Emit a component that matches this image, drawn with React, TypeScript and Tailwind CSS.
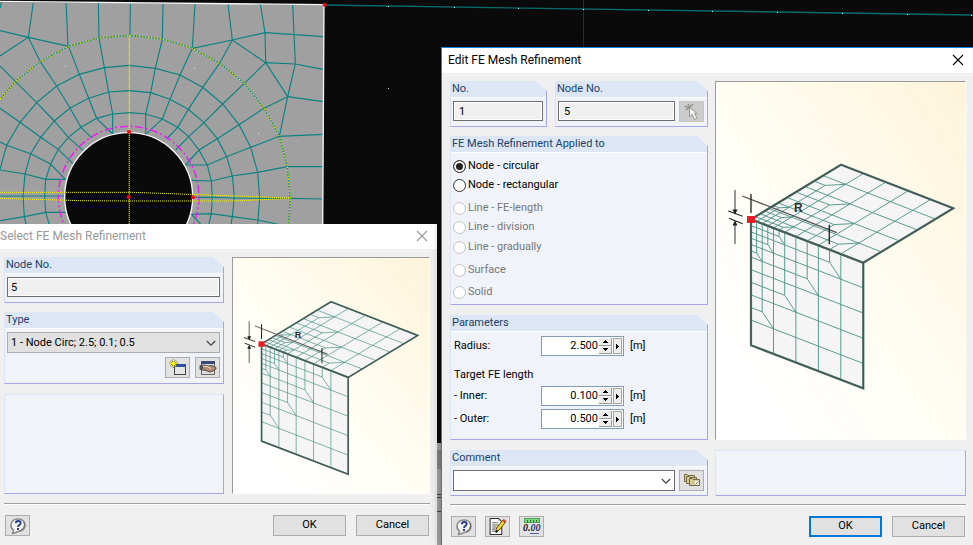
import type { ReactNode } from "react";

type Point = [number, number];

/* ---------- Model view behind the dialogs ---------- */

const spokes: string[] = [
  "338,402 338,342 326,276 313,203 297,114",
  "338,402 290,355 266,295 238,223 206,139",
  "275,413 243,382 210,324 170,258 121,185",
  "250,452 205,412 163,363 110,308 46,244 0,198",
  "220,492 175,448 122,412 60,367 0,325",
  "196,538 152,492 92,461 20,436 0,426",
  "196,538 137,538 75,522 0,510",
  "193,588 134,588 69,588 0,588",
  "198,637 137,637 73,650 0,662",
  "437,403 437,342 452,278 466,205 487,117",
  "437,403 487,357 510,298 540,225 577,145",
  "500,417 533,382 565,328 608,262 659,190",
  "527,450 566,410 612,368 668,312 733,250",
  "556,495 597,450 652,416 717,374 792,325",
  "556,495 622,495 680,470 752,442 838,409",
  "574,541 634,543 697,528 773,517 862,500",
  "579,592 637,592 703,594 779,595 871,595",
  "574,643 634,641 697,650 773,660 866,680",
  "574,643 602,672",
];

const rings: string[] = [
  "150,680 137,637 134,588 137,538 152,492 175,448 205,412 243,382 290,355 338,342 388,338 437,342 487,357 533,382 566,410 597,450 622,495 634,543 637,592 634,641 625,680",
  "80,680 73,650 69,588 75,522 92,461 122,412 163,363 210,324 266,295 326,276 388,272 452,278 510,298 565,328 612,368 652,416 680,470 697,528 703,590 697,650 692,680",
  "0,508 20,436 60,367 110,308 170,258 238,223 313,203 388,196 466,205 540,225 608,262 668,312 717,374 752,442 773,517 779,592 773,672",
  "0,297 46,244 121,185 206,139 297,114 390,106 487,117 577,145 659,190 733,250 792,325 838,409 862,500 871,595 865,680",
];

const outerEdges: string[] = [
  "5,5 0,25",
  "100,8 85,112",
  "198,5 204,139",
  "295,8 297,114",
  "391,10 390,106",
  "489,12 487,117",
  "585,12 577,145",
  "684,12 697,120",
  "781,12 795,98",
  "878,12 886,192 863,290",
  "0,92 85,112 206,139",
  "0,168 85,112 121,185",
  "577,145 697,120 795,98 970,110",
  "659,190 697,120 797,188 795,98",
  "733,250 797,188 886,192 970,208",
  "797,188 863,290 970,305",
  "792,325 863,290 838,409 970,403",
  "862,500 970,500",
  "871,595 970,597",
];

const gridDots = [388, 454, 518, 583, 648, 712, 777, 842, 907, 971];

function ModelView() {
  return (
    <svg className="absolute left-0 top-0 h-[545px] w-[973px]" viewBox="0 0 973 545" aria-hidden="true">
      <rect width="973" height="545" fill="#0a0a0a" />
      <path d="M583.5 0V60" stroke="#2c2c2c" />
      <path d="M325 5L973 15" stroke="#056c6c" strokeWidth="1.3" />
      {gridDots.map((x) => (
        <rect key={x} x={x} y={5 + Math.round((x - 325) / 65)} width="1" height="1" fill="#e8ffff" />
      ))}
      <rect x="388" y="88" width="1" height="1" fill="#ddd" />
      <g transform="scale(0.33333)" fill="none">
        <path d="M0 6L972 14L968 690H0Z" fill="#a0a0a0" />
        <g stroke="#0b8282" strokeWidth="3.4">
          {[...spokes, ...rings, ...outerEdges].map((points, i) => (
            <polyline key={i} points={points} />
          ))}
        </g>
        <path d="M0 4L972 14L968 690" stroke="#f4f4f4" strokeWidth="4" />
        <polyline points={rings[3]} stroke="#f0f000" strokeWidth="3.5" strokeDasharray="4 5" />
        <circle cx="386" cy="590" r="211" stroke="#f312f3" strokeWidth="4" strokeDasharray="24 8 6 8" />
        <circle cx="386" cy="590" r="192" fill="#0a0a0a" stroke="#f4f4f4" strokeWidth="4" />
        <g stroke="#f4f410" strokeWidth="3" strokeDasharray="3 3">
          <path d="M388 106V680" strokeWidth="4" />
          <path d="M0 577H400L871 594" />
          <path d="M0 595L240 602L400 603H700L871 595" />
        </g>
        <g fill="#fb0505">
          <circle cx="387" cy="396" r="6" />
          <circle cx="386" cy="591" r="6" />
          <circle cx="579" cy="592" r="6" />
          <circle cx="974" cy="14" r="6" />
        </g>
        <g fill="#e4e4e4">
          <rect x="195" y="198" width="3" height="3" />
          <rect x="582" y="204" width="3" height="3" />
          <rect x="774" y="399" width="3" height="3" />
        </g>
      </g>
      <g>
        <rect x="437" y="443" width="5" height="102" fill="#a4a7ab" />
        <rect x="437" y="450" width="5" height="19" fill="#83878d" />
        <path d="M437 494.500H442M437 497.500H442M437 511.500H442" stroke="#444" />
      </g>
    </svg>
  );
}

/* ---------- Graded corner mesh drawing ---------- */

const corner: Point = [35, 137.300];
const along: Point = [112.300, 43.400];
const down: Point = [0, 126];
const back: Point = [90, -54.600];

const meshSegments: number[][] = [
  ...[0.200, 0.400, 0.600, 0.800].flatMap((k) => [
    [k, 0, k, 1],
    [0, k, 1, k],
  ]),
  ...[
    [0.1, 0.7],
    [0.3, 0.5],
    [0.5, 0.3],
    [0.7, 0.1],
  ].flatMap(([u, v]) => [
    [u, 0, u, v],
    [0, v, u, v],
    [u, v, u + 0.1, v + 0.1],
  ]),
  ...[
    [0.05, 0.25],
    [0.15, 0.15],
    [0.25, 0.05],
  ].flatMap(([u, v]) => [
    [u, 0, u, v],
    [0, v, u, v],
    [u, v, u + 0.05, v + 0.05],
  ]),
];

function facePath(side: Point) {
  const at = (u: number, v: number) =>
    `${(corner[0] + u * along[0] + v * side[0]).toFixed(1)} ${(corner[1] + u * along[1] + v * side[1]).toFixed(1)}`;
  return meshSegments.map(([a, b, c, d]) => `M${at(a, b)}L${at(c, d)}`).join("");
}

function MeshSketch({ viewBox }: { viewBox: string }) {
  return (
    <div className="min-h-0 flex-1 border border-[#fffefa] border-l-[#9a9a9a] border-t-[#9a9a9a] bg-linear-to-tr from-white from-15% via-[#fffdf3] via-50% to-[#fdf4d9]">
      <svg className="h-full w-full" viewBox={viewBox} preserveAspectRatio="xMinYMin meet" role="img" aria-label="Circular mesh refinement around a node with radius R">
        <g fill="#f5f5f6" stroke="#4d8075" strokeWidth="2.200">
          <path d="M35 137.300L147.300 180.700V306.300L35 263.300Z" />
          <path d="M35 137.300L125 82.700L237.300 126.300L147.300 180.700Z" />
        </g>
        <path d={facePath(down)} fill="none" stroke="#4b9282" strokeWidth="0.900" />
        <path d={facePath(back)} fill="none" stroke="#4b9282" strokeWidth="0.900" />
        <path d="M35 137.300L125 82.700L237.300 126.300L147.300 180.700ZM147.300 180.700V306.300L35 263.300V137" fill="none" stroke="#4a5452" strokeWidth="1.400" />
        <path d="M26.300 114L120.700 150.700" stroke="#565252" strokeWidth="1.300" />
        <path d="M35 112V131M113.300 142.700V162.300" stroke="#1f1f1f" strokeWidth="1.300" />
        <path d="M19 108V130M19 141V162" stroke="#777" strokeWidth="1.500" />
        <path d="M12.300 129L26.700 134.300M13 136.300L26.700 141.700" stroke="#222" strokeWidth="1.200" />
        <path d="M16.500 127.500H21.500L19 132.500ZM16.500 143.500H21.500L19 138.500Z" fill="#1b1b1b" />
        <rect x="31" y="134" width="8" height="7" fill="#ec1c24" />
        <text x="78" y="130" fontSize="12" fontWeight="700" fill="#2e2e2e" fontFamily="Liberation Sans, Arial, sans-serif">
          R
        </text>
      </svg>
    </div>
  );
}

/* ---------- Controls ---------- */

function Group({ title, className = "", children }: { title: string; className?: string; children: ReactNode }) {
  return (
    <section
      className={`flex flex-col border-b border-l border-r border-b-[#a6a6ea] border-l-[#d9e5f7] border-r-[#a6a6ea] bg-[#f0f4fa] [clip-path:polygon(0_0,calc(100%-11px)_0,100%_10px,100%_100%,0_100%)] ${className}`}
    >
      <h2 className="h-[17px] border-b border-white bg-[#dce6f5] pl-px text-[11px] leading-[16px] text-[#1c4268]">
        {title}
      </h2>
      {children}
    </section>
  );
}

function EmptyPanel({ className }: { className: string }) {
  return <div className={`border border-b-[#a6a6ea] border-l-[#d9e5f7] border-r-[#a6a6ea] border-t-[#d9e5f7] bg-[#f0f4fa] ${className}`} />;
}

function IconButton({ label, disabled, children }: { label: string; disabled?: boolean; children: ReactNode }) {
  return (
    <button
      type="button"
      aria-label={label}
      disabled={disabled}
      className="flex h-[21px] w-[25px] shrink-0 items-center justify-center border border-[#adadad] bg-[#e1e1e1] disabled:border-[#c4c4c4] disabled:bg-[#cccccc]"
    >
      {children}
    </button>
  );
}

function PushButton({ primary, children }: { primary?: boolean; children: ReactNode }) {
  return (
    <button
      type="button"
      className={`flex h-[21px] w-[73px] items-center justify-center bg-[#e1e1e1] text-[11px] text-black ${
        primary ? "border-2 border-[#0078d7]" : "border border-[#adadad]"
      }`}
    >
      {children}
    </button>
  );
}

function Chevron() {
  return (
    <svg className="pointer-events-none absolute right-1 top-1/2 h-[10px] w-[10px] -translate-y-1/2" viewBox="0 0 10 10" fill="none" aria-hidden="true">
      <path d="M0.800 3L5 7.200L9.200 3" stroke="#444" strokeWidth="1.200" />
    </svg>
  );
}

function CloseIcon() {
  return (
    <svg className="h-3 w-3" viewBox="0 0 12 12" aria-hidden="true">
      <path d="M1 1L11 11M11 1L1 11" stroke="currentColor" strokeWidth="1.100" />
    </svg>
  );
}

function HelpIcon() {
  return (
    <svg className="h-[18px] w-[18px]" viewBox="0 0 18 18" aria-hidden="true">
      <path d="M3.500 16.500L4.500 13Q1.500 11 2 7.500Q3 2 9 2Q15.500 2 16 8Q16 14 9 14.500Q6 16 3.500 16.500Z" fill="#f4f4f4" stroke="#8a8a8a" strokeWidth="1.500" />
      <path d="M15 5Q17 11 10.500 14" fill="none" stroke="#606060" />
      <path d="M6.800 6.200Q7 4 9.300 4Q11.800 4 11.600 6.200Q11.400 7.500 9.900 8.300Q9.200 8.800 9.100 10" fill="none" stroke="#2b3c8e" strokeWidth="2" />
      <rect x="8" y="11" width="2" height="2" fill="#2b3c8e" />
    </svg>
  );
}

function NewIcon() {
  return (
    <svg className="h-[18px] w-[18px]" viewBox="0 0 18 18" aria-hidden="true">
      <rect x="5.500" y="5.500" width="11" height="10" fill="#e4e4e6" stroke="#444" />
      <rect x="6" y="5" width="11" height="3" fill="#314f9d" />
      <path d="M4.500 0.500V9M0.500 4.500H9M1.800 1.800L7.200 7.200M7.200 1.800L1.800 7.200" stroke="#8d8a18" strokeWidth="1.700" />
      <path d="M4.500 1V8M1 4.500H8M2 2L7 7M7 2L2 7" stroke="#f7ee20" />
    </svg>
  );
}

function EditIcon() {
  return (
    <svg className="h-[18px] w-[18px]" viewBox="0 0 18 18" aria-hidden="true">
      <rect x="2.500" y="3.500" width="13" height="12" fill="#dedede" stroke="#666" />
      <rect x="2" y="2" width="14" height="3" fill="#3a477a" />
      <path d="M1 6.500L5 6L9 7L13 6.500L17 8.500V10L14 12L11 13L7 11.500L4 11L1 10.500Z" fill="#b08c74" stroke="#4e4038" strokeWidth="0.900" />
      <path d="M4 7.500H8L12 9.500" stroke="#ead0b8" strokeWidth="1.200" fill="none" />
      <path d="M1 6.500H4V10.500H1Z" fill="#55565c" />
    </svg>
  );
}

function PickIcon() {
  return (
    <svg className="h-[18px] w-[18px]" viewBox="0 0 18 18" aria-hidden="true">
      <path d="M2 3L10 7M10 1L3 7M5 1L8 7" stroke="#94948f" strokeWidth="1.500" />
      <path d="M6.500 4V13.500L9 11.500L11.500 16.500L14 15L11.500 10.500H14Z" fill="#f1f1ee" stroke="#88887f" strokeWidth="0.800" />
    </svg>
  );
}

function CommentsIcon() {
  return (
    <svg className="h-[18px] w-[18px]" viewBox="0 0 18 18" aria-hidden="true">
      <g fill="#d3c795" stroke="#746b43">
        <path d="M1.500 2.500H4L5 3.500H11.500V9.500H1.500Z" />
        <path d="M3.500 4.500H6L7 5.500H13.500V11.500H3.500Z" />
        <path d="M6.500 6.500H9L10 7.500H16.500V13.500H6.500Z" />
      </g>
      <rect x="12" y="9" width="4" height="4" fill="#fff" />
      <path d="M12.500 12.500L15.500 9.500" stroke="#666" />
    </svg>
  );
}

function NotesIcon() {
  return (
    <svg className="h-[19px] w-[19px]" viewBox="0 0 18 18" aria-hidden="true">
      <path d="M2 1.500H10L13 4.500V16.500H2Z" fill="#f7f7f7" stroke="#333" />
      <path d="M4 5.500H9M4 7.500H10M4 9.500H8M4 11.500H7M4 13.500H9" stroke="#666" />
      <path d="M7.500 14L8 10.500L14 3L16.500 5L10.500 12.500Z" fill="#f4d61f" stroke="#51430b" strokeWidth="0.900" />
      <path d="M13.500 3.500L15 2L17.500 4L16 5.800Z" fill="#cc4638" />
      <path d="M7.300 14.500L9 13" stroke="#111" strokeWidth="1.600" />
    </svg>
  );
}

function UnitsIcon() {
  return (
    <svg className="h-[19px] w-[19px]" viewBox="0 0 19 19" aria-hidden="true">
      <rect x="2.500" y="1.500" width="15" height="4" fill="#7fd581" stroke="#4fa755" />
      <path d="M5.500 3V5M8.500 3V5M11.500 3V5M14.500 3V5" stroke="#28762e" />
      <text x="1" y="14" fontSize="10" fontWeight="700" fontStyle="italic" fontFamily="Liberation Serif, serif" fill="#111">
        0.<tspan fill="#26366f">00</tspan>
      </text>
      <path d="M8 16.500H17" stroke="#4e5fa5" />
    </svg>
  );
}

function RadioRow({ label, className = "", disabled, checked }: { label: string; className?: string; disabled?: boolean; checked?: boolean }) {
  return (
    <label className={`flex h-[19px] items-center gap-[2px] pl-[2px] text-[11px] ${disabled ? "text-[#777]" : "text-black"} ${className}`}>
      <input
        type="radio"
        name="refinement-target"
        defaultChecked={checked}
        disabled={disabled}
        className="h-[13px] w-[13px] appearance-none rounded-full border border-[#333] bg-white checked:bg-[#222] checked:shadow-[inset_0_0_0_2px_#fff] disabled:border-[#c3c3c3]"
      />
      {label}
    </label>
  );
}

function NumberRow({ id, label, value, className = "" }: { id: string; label: string; value: string; className?: string }) {
  return (
    <div className={`flex h-5 items-center pl-[3px] text-[11px] ${className}`}>
      <label htmlFor={id} className="w-[87px]">
        {label}
      </label>
      <div className="flex h-5 w-[83px] items-stretch border border-[#7f9db9] bg-white p-px">
        <input id={id} defaultValue={value} className="min-w-0 flex-1 bg-transparent pr-px text-right text-[11px] leading-4 outline-none" />
        <div className="flex w-[13px] flex-col gap-px">
          <button type="button" aria-label={`Increase ${id}`} className="flex flex-1 items-center justify-center border-b border-r border-[#999] bg-[#ececec]">
            <svg className="h-[3px] w-[5px]" viewBox="0 0 5 3" shapeRendering="crispEdges"><path d="M0 2H1V1H2V0H3V1H4V2H5V3H0Z" /></svg>
          </button>
          <button type="button" aria-label={`Decrease ${id}`} className="flex flex-1 items-center justify-center border-b border-r border-[#999] bg-[#ececec]">
            <svg className="h-[3px] w-[5px]" viewBox="0 0 5 3" shapeRendering="crispEdges"><path d="M0 0H5V1H4V2H3V3H2V2H1V1H0Z" /></svg>
          </button>
        </div>
        <button type="button" aria-label={`Options for ${id}`} className="ml-px flex w-[9px] items-center justify-center border border-[#a5a5a5] bg-[#ececec]">
          <svg className="h-[5px] w-[3px]" viewBox="0 0 3 5" shapeRendering="crispEdges"><path d="M0 0H1V1H2V2H3V3H2V4H1V5H0Z" /></svg>
        </button>
      </div>
      <span className="ml-[6px]">[m]</span>
    </div>
  );
}

const readOnlyField = "h-5 min-w-0 flex-1 border border-[#6e6e6e] bg-[#f0f0f0] text-[11px] leading-4 text-black shadow-[inset_0_0_0_1px_#fff] outline-none";

/* ---------- Dialogs ---------- */

function SelectDialog() {
  return (
    <section aria-label="Select FE Mesh Refinement" className="absolute bottom-0 left-0 top-[224px] flex w-[437px] flex-col bg-[#f0f0f0]">
      <header className="flex h-[25px] items-center justify-between bg-white pb-px pr-[9px] text-[12px] leading-4 text-[#999]">
        <h1>Select FE Mesh Refinement</h1>
        <button type="button" aria-label="Close selection">
          <CloseIcon />
        </button>
      </header>
      <div className="flex flex-col pl-1 pr-[7px] pt-2">
        <div className="flex gap-2">
          <div className="flex w-[220px] flex-col">
            <Group title="Node No." className="h-[46px]">
              <div className="flex pl-[2px] pr-[3px] pt-[3px]">
                <input aria-label="Node No." readOnly value="5" className={`${readOnlyField} pl-[3px]`} />
              </div>
            </Group>
            <Group title="Type" className="mt-[9px] h-[72px]">
              <div className="pl-[2px] pr-[3px] pt-[3px]">
                <div className="relative">
                  <select aria-label="Type" className="block h-[21px] w-full appearance-none border border-[#adadad] bg-[#e1e1e1] pl-[3px] text-[11px] leading-4 text-black">
                    <option>1 - Node Circ; 2.5; 0.1; 0.5</option>
                  </select>
                  <Chevron />
                </div>
                <div className="mt-1 flex justify-end gap-[5px]">
                  <IconButton label="New refinement">
                    <NewIcon />
                  </IconButton>
                  <IconButton label="Edit refinement">
                    <EditIcon />
                  </IconButton>
                </div>
              </div>
            </Group>
            <EmptyPanel className="mt-[10px] h-[100px]" />
          </div>
          <div className="flex flex-1 flex-col">
            <MeshSketch viewBox="-2 26 254 304" />
          </div>
        </div>
        <hr className="mt-[9px] h-[2px] border-b border-t border-b-white border-t-[#a0a0a0]" />
        <div className="mt-[10px] flex items-center pl-px">
          <IconButton label="Help">
            <HelpIcon />
          </IconButton>
          <div className="ml-auto flex gap-[10px] pr-px">
            <PushButton>OK</PushButton>
            <PushButton>Cancel</PushButton>
          </div>
        </div>
      </div>
    </section>
  );
}

function EditDialog() {
  return (
    <section
      aria-label="Edit FE Mesh Refinement"
      className="absolute bottom-0 left-[441px] right-0 top-[47px] flex flex-col border-l border-t border-[#1883d7] bg-[#f0f0f0] shadow-[0_0_10px_rgba(0,0,0,0.35)]"
    >
      <header className="flex h-[25px] items-center justify-between bg-white pb-px pl-[6px] pr-[9px] text-[12px] leading-4 text-black">
        <h1>Edit FE Mesh Refinement</h1>
        <button type="button" aria-label="Close editor">
          <CloseIcon />
        </button>
      </header>
      <div className="flex flex-col pl-2 pr-[7px] pt-2">
        <div className="flex gap-[7px]">
          <div className="flex w-[258px] flex-col">
            <div className="flex gap-2">
              <Group title="No." className="h-[46px] w-[97px] shrink-0">
                <div className="flex pl-[2px] pr-[3px] pt-[3px]">
                  <input aria-label="No." readOnly value="1" className={`${readOnlyField} pl-[5px]`} />
                </div>
              </Group>
              <Group title="Node No." className="h-[46px] min-w-0 flex-1">
                <div className="flex gap-1 pl-[2px] pr-[3px] pt-[3px]">
                  <input aria-label="Node No." readOnly value="5" className={`${readOnlyField} pl-[5px]`} />
                  <IconButton label="Pick node" disabled>
                    <PickIcon />
                  </IconButton>
                </div>
              </Group>
            </div>
            <Group title="FE Mesh Refinement Applied to" className="mt-[9px] h-[169px]">
              <div className="pt-1">
                <RadioRow label="Node - circular" checked />
                <RadioRow label="Node - rectangular" />
                <RadioRow label="Line - FE-length" disabled className="mt-1" />
                <RadioRow label="Line - division" disabled />
                <RadioRow label="Line - gradually" disabled className="mt-px" />
                <RadioRow label="Surface" disabled className="mt-1" />
                <RadioRow label="Solid" disabled className="mt-[3px]" />
              </div>
            </Group>
            <Group title="Parameters" className="mt-[10px] h-[125px]">
              <div className="pt-1">
                <NumberRow id="radius" label="Radius:" value="2.500" />
                <p className="mt-[9px] pl-[3px] text-[11px] leading-5">Target FE length</p>
                <NumberRow id="inner" label="- Inner:" value="0.100" className="mt-px" />
                <NumberRow id="outer" label="- Outer:" value="0.500" className="mt-[3px]" />
              </div>
            </Group>
            <Group title="Comment" className="mt-[10px] h-[46px]">
              <div className="flex gap-1 pl-[2px] pr-[3px] pt-[3px]">
                <div className="relative flex-1">
                  <select aria-label="Comment" className="block h-[21px] w-full appearance-none border border-[#6e6e6e] bg-white text-[11px]">
                    <option />
                  </select>
                  <Chevron />
                </div>
                <IconButton label="Saved comments">
                  <CommentsIcon />
                </IconButton>
              </div>
            </Group>
          </div>
          <div className="flex flex-1 flex-col">
            <MeshSketch viewBox="0 0 249 357" />
            <EmptyPanel className="mt-[10px] h-[46px]" />
          </div>
        </div>
        <hr className="mt-2 h-[2px] border-b border-t border-b-white border-t-[#a0a0a0]" />
        <div className="mt-[10px] flex items-center gap-[9px] pl-px">
          <IconButton label="Help">
            <HelpIcon />
          </IconButton>
          <IconButton label="Notes">
            <NotesIcon />
          </IconButton>
          <IconButton label="Units and decimal places">
            <UnitsIcon />
          </IconButton>
          <div className="ml-auto flex gap-[10px] pr-px">
            <PushButton primary>OK</PushButton>
            <PushButton>Cancel</PushButton>
          </div>
        </div>
      </div>
    </section>
  );
}

export default function App() {
  return (
    <main className="relative h-screen overflow-hidden bg-[#0a0a0a] font-['Roboto','Open_Sans',sans-serif]">
      <ModelView />
      <SelectDialog />
      <EditDialog />
    </main>
  );
}
